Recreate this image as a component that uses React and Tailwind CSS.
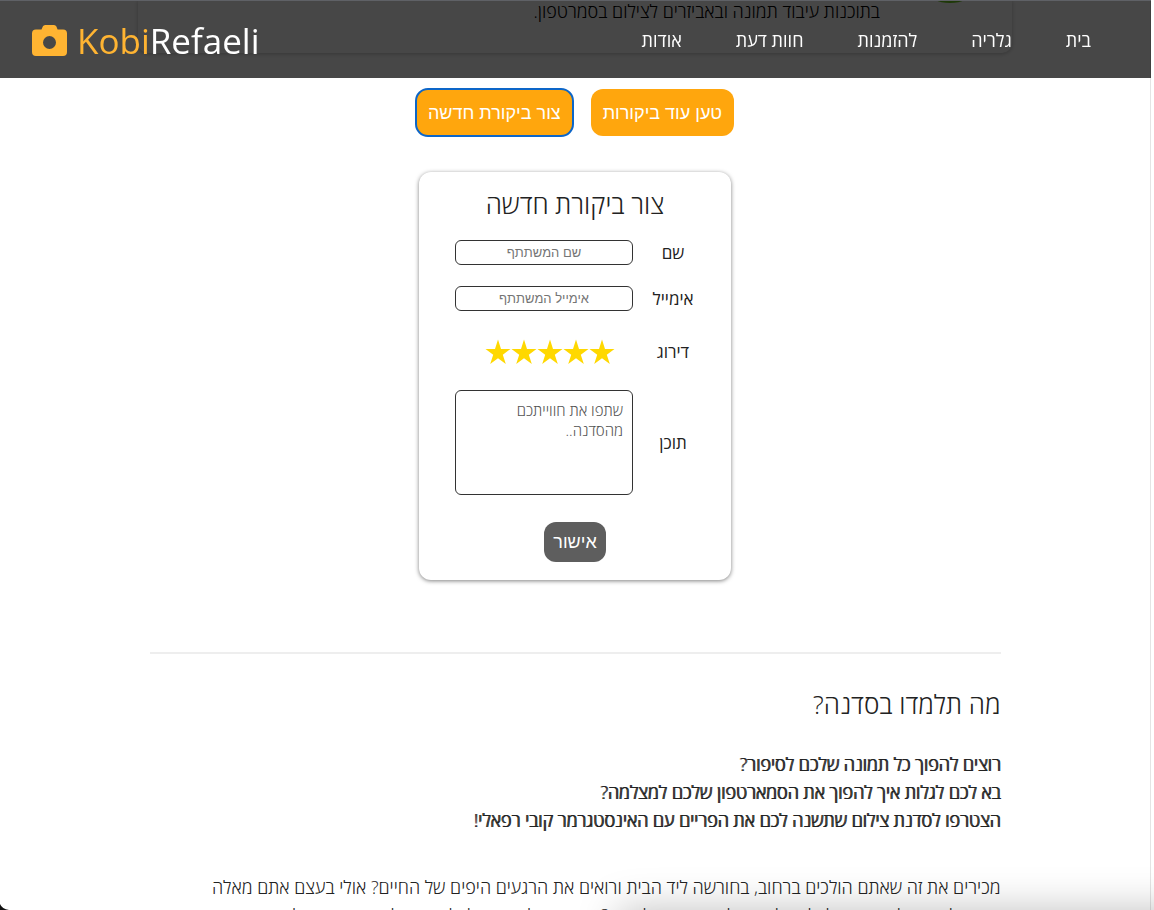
import React from "react";

const NAV = ["בית", "גלריה", "להזמנות", "חוות דעת", "אודות"];

function CameraIcon() {
  return (
    <svg viewBox="0 0 35 31" className="h-[31px] w-[35px]" fill="#ffb432" aria-hidden="true">
      <path
        fillRule="evenodd"
        d="M4 4.500H9.500L10.800 1.600Q11.500 0 13.200 0H22Q23.700 0 24.400 1.600L25.600 4.500H31Q35 4.500 35 8.500V27Q35 31 31 31H4Q0 31 0 27V8.500Q0 4.500 4 4.500ZM17.500 11A6.500 6.500 0 1 0 17.500 24A6.500 6.500 0 1 0 17.500 11Z"
      />
    </svg>
  );
}

function Star() {
  return (
    <svg viewBox="0 0 26 26" className="size-[26px]" fill="#ffd800" aria-hidden="true">
      <path d="M13 0.500L16 10H25.500L17.800 15.700L20.800 25L13 19.300L5.200 25L8.200 15.700L0.500 10H10Z" />
    </svg>
  );
}

function Header() {
  return (
    <header className="fixed inset-x-0 top-0 z-10 mr-[3px] flex h-[78px] items-center justify-between border-t border-[#5f6166] bg-black/72 pr-[60px] pl-8 font-normal text-white">
      <nav>
        <ul className="flex gap-[54px] text-[18px] leading-6">
          {NAV.map((item) => (
            <li key={item}>
              <a href="#">{item}</a>
            </li>
          ))}
        </ul>
      </nav>
      <a href="#" dir="ltr" className="flex items-center gap-[10px] pt-[2px] text-[35px] leading-[48px]">
        <CameraIcon />
        <span>
          <span className="text-[#ffb432]">Kobi</span>Refaeli
        </span>
      </a>
    </header>
  );
}

function ReviewForm() {
  const field =
    "h-[25px] w-[178px] rounded-[6px] border border-[#333] bg-white text-center font-['Liberation_Sans',sans-serif] text-[13px] font-normal placeholder:text-[#757575]";
  const label = "ml-[2px] w-[76px] text-center text-[17px] leading-6 font-normal";
  return (
    <form className="mx-auto mt-9 flex w-[312px] flex-col rounded-[12px] bg-white pt-[14px] pb-[18px] shadow-[0_1px_4px_rgba(0,0,0,0.5)]">
      <h2 className="text-center text-[26px] leading-9">צור ביקורת חדשה</h2>
      <div className="mt-[18px] flex items-center pr-5">
        <label htmlFor="name" className={label}>שם</label>
        <input id="name" type="text" placeholder="שם המשתתף" className={field} />
      </div>
      <div className="mt-[21px] flex items-center pr-5">
        <label htmlFor="email" className={label}>אימייל</label>
        <input id="email" type="email" dir="rtl" placeholder="אימייל המשתתף" className={field} />
      </div>
      <div className="mt-7 flex items-center pr-5">
        <span id="rating" className={label}>דירוג</span>
        <div role="group" aria-labelledby="rating" className="flex w-[166px] justify-center">
          {[1, 2, 3, 4, 5].map((n) => (
            <button key={n} type="button" aria-label={String(n)}>
              <Star />
            </button>
          ))}
        </div>
      </div>
      <div className="mt-[25px] flex items-center pr-5">
        <label htmlFor="content" className={label}>תוכן</label>
        <textarea
          id="content"
          placeholder="שתפו את חווייתכם מהסדנה.."
          className="h-[105px] w-[178px] resize-none rounded-[6px] border border-[#333] bg-white p-[9px] text-[15px] leading-5 placeholder:text-[#555]"
        />
      </div>
      <button type="submit" className="mx-auto mt-[27px] h-10 rounded-[12px] bg-[#5e5e5e] px-[9px] font-['Liberation_Sans',sans-serif] text-[18px] leading-6 font-normal text-white">
        אישור
      </button>
    </form>
  );
}

export default function App() {
  const action =
    "h-[47px] rounded-[12px] bg-[#ffa60d] px-3 font-['Liberation_Sans',sans-serif] text-[18px] leading-6 font-normal text-white";
  return (
    <div dir="rtl" className="relative h-screen overflow-hidden bg-white font-['Open_Sans','Noto_Sans',sans-serif] font-light text-[#222]">
      <Header />
      <div className="mr-[3px] h-full border-r border-[#e4e4e4]">
        <main>
          <article className="mx-auto flex h-[53px] w-[76%] items-start rounded-b-[10px] pr-[33px] text-[18px] text-black shadow-[0_1px_4px_rgba(0,0,0,0.25)]">
            <div className="h-[3px] w-[58px] overflow-hidden">
              <svg viewBox="0 0 58 3" className="h-[3px] w-[58px]" aria-hidden="true">
                <path d="M14 0H44Q38 3 29 3T14 0Z" fill="#6cc81e" />
              </svg>
            </div>
            <p className="mr-[41px] leading-[23px]">בתוכנות עיבוד תמונה ובאביזרים לצילום בסמרטפון.</p>
          </article>
          <div className="mt-9 flex justify-center gap-[18px]">
            <button type="button" className={action}>טען עוד ביקורות</button>
            <button type="button" className={action + " outline-2 -outline-offset-1 outline-[#0d66c8]"}>צור ביקורת חדשה</button>
          </div>
          <ReviewForm />
          <section className="mx-auto mt-[72px] w-[74%] border-t-2 border-[#eee] pt-[30px] text-[18px]">
            <h2 className="text-[26px] leading-10">מה תלמדו בסדנה?</h2>
            <p className="mt-[26px] leading-[28px] [text-shadow:1px_0_0_currentColor]">
              רוצים להפוך כל תמונה שלכם לסיפור?
              <br />
              בא לכם לגלות איך להפוך את הסמארטפון שלכם למצלמה?
              <br />
              הצטרפו לסדנת צילום שתשנה לכם את הפריים עם האינסטגרמר קובי רפאלי!
            </p>
            <p className="mt-[39px] leading-[28px]">
              מכירים את זה שאתם הולכים ברחוב, בחורשה ליד הבית ורואים את הרגעים היפים של החיים? אולי בעצם אתם מאלה
              <br />
              שמטיילים בעולם ורוצים לצלם כל רגע ולשמור אותו לתמיד? בסדנה נלמד איך לצלם נכון ולספר סיפור שלם
            </p>
          </section>
        </main>
      </div>
      <div className="pointer-events-none absolute top-full -right-16 h-16 w-[52%] shadow-[0_0_40px_rgba(0,0,0,0.25)]" />
      <svg viewBox="0 0 9 6" className="absolute bottom-0 left-0 h-[6px] w-[9px]" aria-hidden="true">
        <path d="M0 0Q2 5 9 6H0Z" fill="#111" />
      </svg>
    </div>
  );
}
